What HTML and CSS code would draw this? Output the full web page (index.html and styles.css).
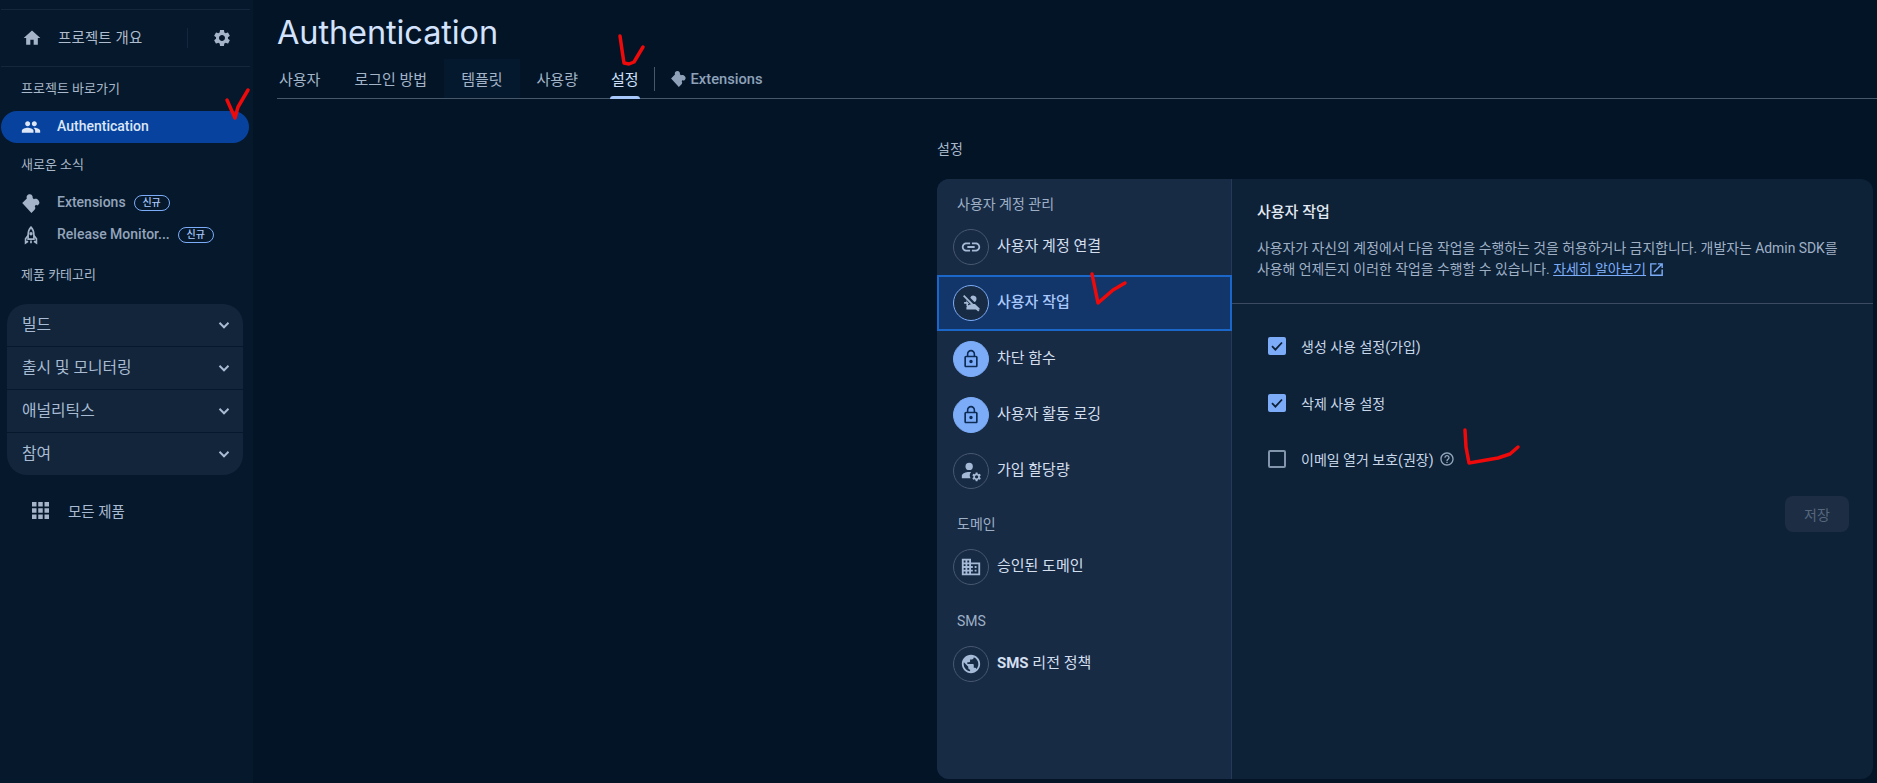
FILE: index.html
```html
<!DOCTYPE html>
<html lang="ko">
<head>
<meta charset="utf-8">
<title>Authentication</title>
<link rel="stylesheet" href="styles.css">
</head>
<body>
<div class="app">
  <aside class="side">
    <div class="overview">
      <svg class="ic20 home" viewBox="0 0 24 24"><path d="M10 20v-6h4v6h5v-8h3L12 3 2 12h3v8z"/></svg>
      <span class="ov-label">프로젝트 개요</span>
      <span class="ov-div"></span>
      <svg class="ic20 gear" viewBox="0 0 24 24"><path d="M19.14 12.94c.04-.3.06-.61.06-.94 0-.32-.02-.64-.07-.94l2.03-1.58c.18-.14.23-.41.12-.61l-1.92-3.32c-.12-.22-.37-.29-.59-.22l-2.39.96c-.5-.38-1.03-.7-1.62-.94l-.36-2.54c-.04-.24-.24-.41-.48-.41h-3.84c-.24 0-.43.17-.47.41l-.36 2.54c-.59.24-1.13.57-1.62.94l-2.39-.96c-.22-.08-.47 0-.59.22L2.74 8.87c-.12.21-.08.47.12.61l2.03 1.58c-.05.3-.09.63-.09.94s.02.64.07.94l-2.03 1.58c-.18.14-.23.41-.12.61l1.92 3.32c.12.22.37.29.59.22l2.39-.96c.5.38 1.03.7 1.62.94l.36 2.54c.05.24.24.41.48.41h3.84c.24 0 .44-.17.47-.41l.36-2.54c.59-.24 1.13-.56 1.62-.94l2.39.96c.22.08.47 0 .59-.22l1.92-3.32c.12-.22.07-.47-.12-.61l-2.01-1.58zM12 15.6c-1.98 0-3.6-1.62-3.6-3.6s1.62-3.6 3.6-3.6 3.6 1.62 3.6 3.6-1.62 3.6-3.6 3.6z"/></svg>
    </div>
    <div class="side-title first">프로젝트 바로가기</div>
    <div class="nav-item active">
      <svg class="ic20" viewBox="0 0 24 24"><path d="M16 11c1.66 0 2.99-1.34 2.99-3S17.66 5 16 5c-1.66 0-3 1.34-3 3s1.34 3 3 3zm-8 0c1.66 0 2.99-1.34 2.99-3S9.66 5 8 5C6.34 5 5 6.34 5 8s1.34 3 3 3zm0 2c-2.33 0-7 1.17-7 3.5V19h14v-2.5c0-2.33-4.67-3.5-7-3.5zm8 0c-.29 0-.62.02-.97.05 1.16.84 1.97 1.97 1.97 3.45V19h6v-2.5c0-2.33-4.67-3.5-7-3.5z"/></svg>
      <span>Authentication</span>
    </div>
    <div class="side-title news">새로운 소식</div>
    <div class="nav-item">
      <svg class="ic20" viewBox="0 0 24 24"><path d="M1.500 12L7 6.500C6 3.500 8 1.500 10.500 1.500C13 1.500 14.500 4 14 6L15.500 7.500C17.500 6.500 20 7 21.500 9.500C23 12 21.500 14 19.500 15L18 14L16.500 16C17.500 17.500 17.500 19 16 20.500L12.500 24Z"/></svg>
      <span>Extensions</span><span class="badge">신규</span>
    </div>
    <div class="nav-item">
      <svg class="ic20 rocket" viewBox="0 0 24 24"><path d="M12 2.500C9 5.500 8.500 9 8.500 12V17H15.500V12C15.500 9 15 5.500 12 2.500Z"/><path d="M8.500 12.500L5.500 16.500V21.500L8.500 19.500M15.500 12.500L18.500 16.500V21.500L15.500 19.500M12 18.500V22"/><circle cx="12" cy="10.500" r="1"/></svg>
      <span>Release Monitor...</span><span class="badge">신규</span>
    </div>
    <div class="side-title cat">제품 카테고리</div>
    <div class="accordion">
      <div class="acc-row"><span>빌드</span><svg class="chev" viewBox="0 0 24 24"><path d="M6 9l6 6 6-6"/></svg></div>
      <div class="acc-row"><span>출시 및 모니터링</span><svg class="chev" viewBox="0 0 24 24"><path d="M6 9l6 6 6-6"/></svg></div>
      <div class="acc-row"><span>애널리틱스</span><svg class="chev" viewBox="0 0 24 24"><path d="M6 9l6 6 6-6"/></svg></div>
      <div class="acc-row"><span>참여</span><svg class="chev" viewBox="0 0 24 24"><path d="M6 9l6 6 6-6"/></svg></div>
    </div>
    <div class="all-products">
      <svg class="apps" viewBox="0 0 17 17"><path d="M0 0h4.500v4.500H0zM6.250 0h4.500v4.500h-4.500zM12.500 0H17v4.500h-4.500zM0 6.250h4.500v4.500H0zM6.250 6.250h4.500v4.500h-4.500zM12.500 6.250H17v4.500h-4.500zM0 12.500h4.500V17H0zM6.250 12.500h4.500V17h-4.500zM12.500 12.500H17V17h-4.500z"/></svg>
      <span>모든 제품</span>
    </div>
  </aside>

  <main class="main">
    <h1 class="title">Authentication</h1>
    <nav class="tabs">
      <a class="tab tab-first">사용자</a>
      <a class="tab">로그인 방법</a>
      <a class="tab hover">템플릿</a>
      <a class="tab">사용량</a>
      <a class="tab current">설정</a>
      <span class="tab-div"></span>
      <a class="tab ext">
        <svg class="tab-puzzle" viewBox="0 0 24 24"><path d="M1.500 12L7 6.500C6 3.500 8 1.500 10.500 1.500C13 1.500 14.500 4 14 6L15.500 7.500C17.500 6.500 20 7 21.500 9.500C23 12 21.500 14 19.500 15L18 14L16.500 16C17.500 17.500 17.500 19 16 20.500L12.500 24Z"/></svg>
        Extensions
      </a>
    </nav>

    <section class="settings">
      <div class="settings-label">설정</div>
      <div class="card">
        <div class="menu">
          <div class="menu-title top">사용자 계정 관리</div>
          <div class="menu-item">
            <span class="disc"><svg viewBox="0 0 24 24"><path d="M3.900 12c0-1.710 1.390-3.100 3.100-3.100h4V7H7c-2.760 0-5 2.240-5 5s2.240 5 5 5h4v-1.900H7c-1.710 0-3.100-1.390-3.100-3.100zM8 13h8v-2H8v2zm9-6h-4v1.900h4c1.710 0 3.100 1.390 3.100 3.100s-1.390 3.100-3.100 3.100h-4V17h4c2.760 0 5-2.240 5-5s-2.240-5-5-5z"/></svg></span>
            <span class="item-label">사용자 계정 연결</span>
          </div>
          <div class="menu-item selected">
            <span class="disc"><svg viewBox="0 0 24 24"><path d="M14.500 11a3.500 3.500 0 1 0-3.300-4.700l4.500 4.500c-.4.100-.8.200-1.200.200zM7 8.500V11H4.500v1.800H7v2.500h1.800v-2.500h1.500L7.800 10.300 7 8.500zM14.500 13c-2.800 0-7.500 1.400-7.500 3.800V19h14.500v-1l-5.200-4.800c-.6-.100-1.200-.200-1.800-.200z"/><path class="slash" d="M4 4l16.500 16.500"/></svg></span>
            <span class="item-label">사용자 작업</span>
          </div>
          <div class="menu-item">
            <span class="disc solid"><svg viewBox="0 0 24 24"><path d="M18 8h-1V6c0-2.760-2.240-5-5-5S7 3.240 7 6v2H6c-1.100 0-2 .9-2 2v10c0 1.100.9 2 2 2h12c1.100 0 2-.9 2-2V10c0-1.100-.9-2-2-2zM8.900 6c0-1.710 1.390-3.100 3.100-3.100s3.100 1.390 3.100 3.100v2H8.900V6zM18 20H6V10h12v10zm-6-3c1.100 0 2-.9 2-2s-.9-2-2-2-2 .9-2 2 .9 2 2 2z"/></svg></span>
            <span class="item-label">차단 함수</span>
          </div>
          <div class="menu-item">
            <span class="disc solid"><svg viewBox="0 0 24 24"><path d="M18 8h-1V6c0-2.760-2.240-5-5-5S7 3.240 7 6v2H6c-1.100 0-2 .9-2 2v10c0 1.100.9 2 2 2h12c1.100 0 2-.9 2-2V10c0-1.100-.9-2-2-2zM8.900 6c0-1.710 1.390-3.100 3.100-3.100s3.100 1.390 3.100 3.100v2H8.900V6zM18 20H6V10h12v10zm-6-3c1.100 0 2-.9 2-2s-.9-2-2-2-2 .9-2 2 .9 2 2 2z"/></svg></span>
            <span class="item-label">사용자 활동 로깅</span>
          </div>
          <div class="menu-item">
            <span class="disc"><svg viewBox="0 0 24 24"><circle cx="10" cy="7" r="4"/><path d="M10 13c-3.500 0-8 1.600-8 4v3h9.500a6 6 0 0 1 .6-6.800c-.7-.1-1.400-.2-2.100-.2z"/><path d="M21.600 17.700l1.100-.9-1-1.800-1.400.5c-.3-.3-.6-.4-1-.6l-.2-1.400h-2l-.2 1.400c-.4.200-.7.300-1 .6l-1.400-.5-1 1.800 1.100.9v1.200l-1.100.9 1 1.800 1.400-.5c.3.300.6.400 1 .6l.2 1.400h2l.2-1.400c.4-.2.700-.3 1-.6l1.400.5 1-1.800-1.100-.9v-1.200zm-3.500 2.400a1.800 1.800 0 1 1 0-3.600 1.800 1.800 0 0 1 0 3.600z"/></svg></span>
            <span class="item-label">가입 할당량</span>
          </div>
          <div class="menu-title domain">도메인</div>
          <div class="menu-item">
            <span class="disc"><svg viewBox="0 0 24 24"><path d="M12 7V3H2v18h20V7H12zM6 19H4v-2h2v2zm0-4H4v-2h2v2zm0-4H4V9h2v2zm0-4H4V5h2v2zm4 12H8v-2h2v2zm0-4H8v-2h2v2zm0-4H8V9h2v2zm0-4H8V5h2v2zm10 12h-8v-2h2v-2h-2v-2h2v-2h-2V9h8v10zm-2-8h-2v2h2v-2zm0 4h-2v2h2v-2z"/></svg></span>
            <span class="item-label">승인된 도메인</span>
          </div>
          <div class="menu-title sms">SMS</div>
          <div class="menu-item">
            <span class="disc"><svg viewBox="0 0 24 24"><path d="M12 2C6.480 2 2 6.480 2 12s4.480 10 10 10 10-4.480 10-10S17.520 2 12 2zm-1 17.930c-3.950-.49-7-3.850-7-7.930 0-.62.080-1.210.21-1.790L9 15v1c0 1.100.9 2 2 2v1.930zm6.900-2.540c-.26-.81-1-1.390-1.900-1.390h-1v-3c0-.55-.45-1-1-1H8v-2h2c.55 0 1-.45 1-1V7h2c1.100 0 2-.9 2-2v-.41c2.930 1.190 5 4.060 5 7.410 0 2.080-.8 3.970-2.100 5.390z"/></svg></span>
            <span class="item-label"><b class="latin">SMS</b> 리전 정책</span>
          </div>
        </div>
        <div class="detail">
          <header class="detail-head">
            <h2>사용자 작업</h2>
            <p>사용자가 자신의 계정에서 다음 작업을 수행하는 것을 허용하거나 금지합니다. 개발자는 Admin SDK를 사용해 언제든지 이러한 작업을 수행할 수 있습니다. <a class="link">자세히 알아보기</a><svg class="open" viewBox="0 0 24 24"><path d="M19 19H5V5h7V3H3v18h18v-9h-2v7zM14 3v2h3.590l-9.830 9.830 1.410 1.410L19 6.410V10h2V3h-7z"/></svg></p>
          </header>
          <div class="options">
            <label class="option"><span class="check on"><svg viewBox="0 0 18 18"><path d="M4 9.200l3.400 3.400L14 5.500"/></svg></span><span>생성 사용 설정(가입)</span></label>
            <label class="option"><span class="check on"><svg viewBox="0 0 18 18"><path d="M4 9.200l3.400 3.400L14 5.500"/></svg></span><span>삭제 사용 설정</span></label>
            <label class="option"><span class="check"></span><span>이메일 열거 보호(권장)</span><svg class="help" viewBox="0 0 24 24"><path d="M11 18h2v-2h-2v2zm1-16C6.480 2 2 6.480 2 12s4.480 10 10 10 10-4.480 10-10S17.520 2 12 2zm0 18c-4.410 0-8-3.590-8-8s3.590-8 8-8 8 3.590 8 8-3.590 8-8 8zm0-14c-2.210 0-4 1.790-4 4h2c0-1.100.9-2 2-2s2 .9 2 2c0 2-3 1.750-3 5h2c0-2.250 3-2.500 3-5 0-2.210-1.790-4-4-4z"/></svg></label>
          </div>
          <div class="actions"><button class="save" type="button">저장</button></div>
        </div>
      </div>
    </section>
  </main>
</div>
<svg class="marks" viewBox="0 0 1877 783">
  <path d="M227 100l8 18 3-11 10-17"/>
  <path d="M620 36l2 14 2 13 5 1 5-2 9-15"/>
  <path d="M1092 274l6 29 15-13 12-7"/>
  <path d="M1465 430l1 17 3 16 29-5 12-4 8-7"/>
</svg>
</body>
</html>
```

FILE: styles.css
```css
* { box-sizing: border-box; }
html, body { margin: 0; height: 100%; }
body {
  background: #021426;
  color: #c4d0e0;
  font-family: Roboto, "Noto Sans CJK KR", sans-serif;
  font-size: 14px;
  overflow: hidden;
}
.app { display: flex; height: 783px; }

/* Sidebar */
.side {
  width: 253px;
  flex: none;
  background: #06182b;
  padding-top: 9px;
}
.overview {
  display: flex;
  align-items: center;
  height: 58px;
  width: 249px;
  margin-left: 1px;
  padding-left: 21px;
  border-top: 1px solid #14273d;
  border-bottom: 1px solid #14273d;
  color: #aebccd;
}
.ic20 { width: 20px; height: 20px; flex: none; fill: #a5b4c9; }
.ov-label { margin-left: 16px; padding-bottom: 3px; font-size: 14.400px; letter-spacing: .2px; width: 130px; }
.ov-div { width: 1px; height: 20px; background: #14273d; margin-left: -1px; }
.gear { margin-left: 24px; }
.side-title { padding-left: 21px; font-size: 13px; line-height: 18px; color: #a9b8ca; }
.first { margin-top: 13px; }
.news { margin-top: 13px; }
.cat { margin-top: 15px; }
.nav-item {
  display: flex;
  align-items: center;
  height: 32px;
  padding-left: 21px;
  font-size: 14px;
  font-weight: 500;
  color: #93a4bb;
}
.nav-item > svg + span { margin-left: 16px; padding-bottom: 2px; }
.news + .nav-item { margin-top: 13px; }
.active {
  height: 32px;
  width: 248px;
  margin: 13px 0 0 1px;
  padding-left: 20px;
  border-radius: 16px;
  background: #07439e;
  color: #dce6f7;
}
.active .ic20 { fill: #dce6f7; }
.badge {
  margin-left: 8px;
  width: 36px;
  height: 16px;
  border: 1px solid #7cacf8;
  border-radius: 8px;
  color: #a8c7fa;
  font-size: 10px;
  line-height: 14px;
  text-align: center;
}
.rocket { fill: none; stroke: #a5b4c9; stroke-width: 2; }
.accordion {
  margin: 20px 0 0 7px;
  width: 236px;
  border-radius: 20px;
  background: #12253b;
  overflow: hidden;
}
.acc-row {
  display: flex;
  align-items: center;
  justify-content: space-between;
  height: 43px;
  padding: 0 10px 0 15px;
  font-size: 15.800px;
  color: #a8bbd2;
  border-bottom: 1px solid #06182b;
}
.acc-row span { padding-bottom: 4px; }
.acc-row:last-child { border-bottom: 0; height: 42px; }
.chev { width: 18px; height: 18px; fill: none; stroke: #a8bbd2; stroke-width: 2.600; }
.all-products {
  display: flex;
  align-items: center;
  margin: 25px 0 0 32px;
  gap: 19px;
  font-size: 14.500px;
  color: #a8bbd2;
}
.apps { width: 17px; height: 17px; fill: #a5b4c9; }

/* Main */
.main { flex: 1; min-width: 0; padding: 0 0 0 24px; }
.title {
  margin: 0;
  padding-top: 13px;
  height: 57px;
  font-size: 32.500px;
  line-height: 40px;
  font-weight: 400;
  color: #d3e3fd;
  font-family: Inter, Roboto, sans-serif;
  letter-spacing: -.1px;
}
.tabs {
  display: flex;
  align-items: center;
  height: 40px;
  margin-top: 2px;
  border-bottom: 1px solid #47586b;
}
.tab {
  display: flex;
  align-items: center;
  align-self: stretch;
  padding: 0 17px;
  font-size: 15px;
  color: #a4b4c8;
  position: relative;
}
.tab-first { padding-left: 2px; }
.hover { background: #04192e; }
.current { color: #cfe0fb; padding: 0 15px; margin-left: 1px; }
.current::after {
  content: "";
  position: absolute;
  left: 14px;
  right: 14px;
  bottom: -1px;
  height: 3px;
  border-radius: 3px 3px 0 0;
  background: #a8c7fa;
}
.tab-div { width: 1px; height: 24px; background: #47586b; }
.ext { font-weight: 500; font-size: 14.700px; color: #8ea1b9; gap: 4px; padding-left: 15px; }
.tab-puzzle { width: 17px; height: 17px; fill: #8ea1b9; }

.settings { margin: 0 4px 0 0; padding-left: 660px; }
.settings-label { padding-top: 41px; height: 80px; font-size: 14px; line-height: 18px; color: #a9b8ca; }
.card {
  display: flex;
  height: 600px;
  border-radius: 12px;
  overflow: hidden;
  background: #0d2137;
}
.menu {
  width: 295px;
  flex: none;
  background: #182b45;
  border-right: 1px solid #26395a;
}
.menu-title { padding-left: 20px; font-size: 14px; line-height: 18px; color: #9eafc5; }
.top { padding-top: 16px; height: 40px; }
.domain { padding-top: 16px; height: 40px; }
.sms { padding-top: 17px; height: 41px; }
.menu-item {
  display: flex;
  align-items: center;
  gap: 8px;
  height: 56px;
  padding-left: 16px;
  font-size: 15px;
  color: #d3dfee;
}
.item-label { padding-bottom: 5px; }
.disc {
  display: flex;
  align-items: center;
  justify-content: center;
  flex: none;
  width: 36px;
  height: 36px;
  border-radius: 50%;
  border: 1px solid #47586f;
}
.disc svg { width: 22px; height: 22px; fill: #a5bad6; }
.disc.solid { background: #7cacf8; border-color: #7cacf8; }
.disc.solid svg { width: 20px; height: 20px; fill: #0d2b55; }
.selected {
  background: #12356a;
  box-shadow: inset 0 0 0 2px #1b66c9;
  color: #a8c7fa;
  font-weight: 500;
  width: 295px;
}
.selected .disc { border-color: #7cacf8; background: #182b45; }
.slash { fill: none; stroke: #a5bad6; stroke-width: 2; }
.latin { font-weight: 700; }

.detail { flex: 1; min-width: 0; }
.detail-head { height: 125px; padding: 23px 30px 0 25px; border-bottom: 1px solid #3b4c60; }
.detail-head h2 { margin: 0; font-size: 15px; font-weight: 500; line-height: 20px; color: #e3e9f2; }
.detail-head p { margin: 16px 0 0; font-size: 13.900px; line-height: 21px; color: #9fb0c5; }
.link { color: #7cacf8; text-decoration: underline; }
.open { width: 17px; height: 17px; fill: #7cacf8; vertical-align: -4px; margin-left: 2px; }
.options { padding: 33px 0 0 36px; }
.option { display: flex; align-items: center; height: 18px; margin-bottom: 38.500px; gap: 15px; font-size: 14px; color: #c7d6e8; }
.check {
  width: 18px;
  height: 18px;
  flex: none;
  border: 2px solid #8295ad;
  border-radius: 2px;
}
.check.on { background: #7cacf8; border: 0; }
.check svg { display: block; width: 18px; height: 18px; fill: none; stroke: #0d2137; stroke-width: 1.800; }
.help { width: 16px; height: 16px; fill: #94a6bc; margin-left: -10px; }
.actions { display: flex; justify-content: flex-end; padding-right: 24px; margin-top: -11px; }
.save {
  width: 64px;
  height: 36px;
  border: 0;
  border-radius: 8px;
  background: #1c2d44;
  color: #56677c;
  font: 14px Roboto, "Noto Sans CJK KR", sans-serif;
}

/* Hand-drawn red annotations laid over the screenshot */
.marks {
  position: absolute;
  left: 0;
  top: 0;
  width: 1877px;
  height: 783px;
  pointer-events: none;
  fill: none;
  stroke: #ee0a0a;
  stroke-width: 3.500;
  stroke-linecap: round;
  stroke-linejoin: round;
}
```
